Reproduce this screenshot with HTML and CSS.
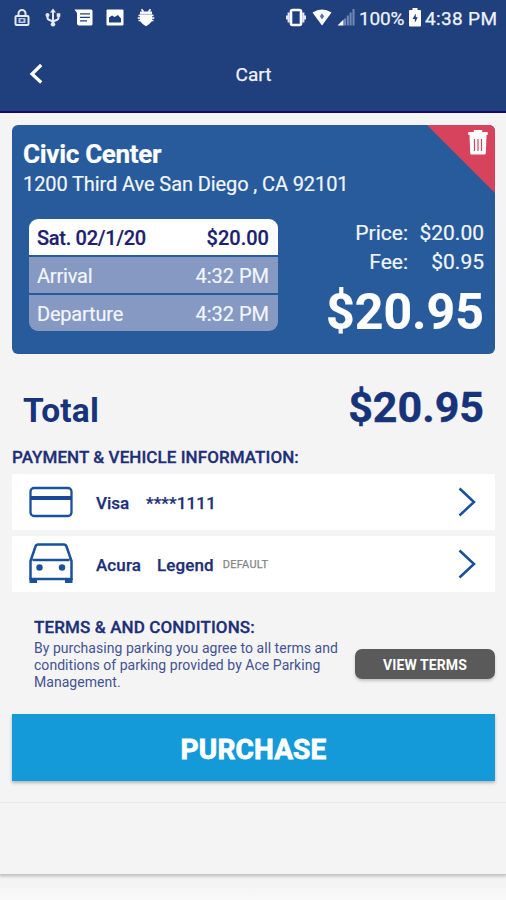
FILE: index.html
```
<!DOCTYPE html>
<html lang="en">
<head>
<meta charset="utf-8">
<title>Cart</title>
<link rel="stylesheet" href="styles.css">
</head>
<body>
<header class="header">
  <div class="status">
    <div class="status-icons">
      <svg width="16" height="20" viewBox="0 0 16 20"><path d="M4.500 8V5.500a3.500 3.500 0 0 1 7 0V8" fill="none" stroke="#e4e9f5" stroke-width="2"/><rect x="1.500" y="8" width="13" height="9" rx="1" fill="none" stroke="#e4e9f5" stroke-width="2"/><path d="M4.500 10h7v5h-7z" fill="#b9c5df"/><path d="M6.500 11.300h3v2.200h-3z" fill="#203f7d"/></svg>
      <svg width="16" height="20" viewBox="0 0 16 20"><path d="M8 3v13M2.500 7v2.500q0 2 2 2.500L8 13.500M13.500 7v2.500q0 2-2 2.500L8 13.500" fill="none" stroke="#e4e9f5" stroke-width="2"/><path d="M8 .5l3 4H5z" fill="#e4e9f5"/><circle cx="8" cy="16.300" r="2.300" fill="#e4e9f5"/><circle cx="2.500" cy="7" r="2" fill="#e4e9f5"/><path d="M11.700 5.200h3.600v3.600h-3.600z" fill="#e4e9f5"/></svg>
      <svg width="20" height="20" viewBox="0 0 20 20"><path d="M.5 1.500H17q1.500 0 1.500 1.500v13q0 1.500-1.500 1.500H5q-2 0-2-2V5z" fill="#fff"/><path d="M6 5.800h10M6 9.300h10M6 12.800h7" stroke="#203f7d" stroke-width="1.200"/></svg>
      <svg width="18" height="20" viewBox="0 0 18 20"><rect x=".5" y="1.500" width="17" height="16" rx="1" fill="#fff"/><path d="M3 14.500V9.500l3-2 2.500 1.500L12 7l3 3.500v4z" fill="#203f7d"/></svg>
      <svg width="18" height="20" viewBox="0 0 18 20"><path d="M3 3.500h12V13q-2 3-6 5.300Q5 16 3 13z" fill="#fff"/><path d="M4.500 1.200l2 2.500M13.500 1.200l-2 2.500M1.500 7.500h15M.7 10h16.600M1.500 12.500h15" fill="none" stroke="#fff" stroke-width="1.700"/><path d="M2 6.300h14" stroke="#8c9dc2" stroke-width=".8"/></svg>
    </div>
    <div class="status-info">
      <svg class="vibrate" width="20" height="20" viewBox="0 0 20 20"><rect x="5" y="2" width="10" height="15" rx="1.500" fill="none" stroke="#fff" stroke-width="2.600"/><path d="M2.700 4.500v10M17.300 4.500v10M.7 7.500v4M19.300 7.500v4" stroke="#e4e9f5" stroke-width="2.200"/></svg>
      <svg class="wifi" width="20" height="20" viewBox="0 0 20 20"><path d="M.5 4.500Q10-1.700 19.500 4.500L10 17.500z" fill="#fff"/><path d="M10 5.300l2.200 3-2.200 3.200-2.200-3.200z" fill="#6277a6"/></svg>
      <svg class="signal" width="18" height="20" viewBox="0 0 18 20"><path d="M.5 17.500L6.500 11.500v6z" fill="#fff"/><path d="M8 10.500v7M10.800 7.500v10M13.600 4.500v13M16.500 1v16.500" stroke="#7187b4" stroke-width="2.100"/></svg>
      <span class="battery-level">100%</span>
      <svg class="battery" width="12" height="20" viewBox="0 0 12 20"><path d="M3.500 0h5v2H11q1 0 1 1v14.500q0 1-1 1H1q-1 0-1-1V3q0-1 1-1h2.500z" fill="#fff"/><path d="M6.800 5.500L3.500 11h2.300v3.800L8.800 9.200H6.800z" fill="#203f7d"/></svg>
      <span class="clock">4:38 PM</span>
    </div>
  </div>
  <div class="navbar">
    <svg class="back" width="14" height="22" viewBox="0 0 14 22"><path d="M12.200 2L3 11l9.200 8.500" fill="none" stroke="#fff" stroke-width="3.200"/></svg>
    <h1 class="title">Cart</h1>
  </div>
</header>
<main class="content">
  <section class="ticket">
    <div class="remove"><svg width="20" height="26" viewBox="0 0 20 26"><path d="M.3 3h5.500V1h8.400v2h5.500v3H.3zM1.500 6h17L17.800 24q0 1.500-1.500 1.500H3.700q-1.500 0-1.500-1.500z" fill="#fff"/><path d="M6.500 10v12M10 10v12M13.500 10v12" stroke="#d7435c" stroke-width="1.200"/></svg></div>
    <h2 class="place">Civic Center</h2>
    <p class="address">1200 Third Ave San Diego , CA 92101</p>
    <div class="ticket-body">
      <div class="times">
        <div class="time-row time-date"><span class="date">Sat. 02/1/20</span><span>$20.00</span></div>
        <div class="time-row"><span class="label">Arrival</span><span>4:32 PM</span></div>
        <div class="time-row"><span class="label">Departure</span><span>4:32 PM</span></div>
      </div>
      <div class="costs">
        <div class="cost"><span>Price:</span><span class="amount">$20.00</span></div>
        <div class="cost"><span>Fee:</span><span class="amount">$0.95</span></div>
        <div class="sum">$20.95</div>
      </div>
    </div>
  </section>
  <section class="total"><span class="total-label">Total</span><span class="total-value">$20.95</span></section>
  <h3 class="heading">PAYMENT &amp; VEHICLE INFORMATION:</h3>
  <div class="options">
    <div class="option">
      <svg class="option-icon" width="44" height="44" viewBox="0 0 44 44"><rect x="1.500" y="8" width="41" height="28" rx="3.500" fill="none" stroke="#1b509a" stroke-width="2.300"/><path d="M1.500 18h41" stroke="#174994" stroke-width="4"/></svg>
      <span class="visa">Visa</span><span class="digits">****1111</span>
      <svg class="chevron" width="18" height="30" viewBox="0 0 18 30"><path d="M1.500 1.500L16 15 1.500 28.500" fill="none" stroke="#174f9f" stroke-width="2.500"/></svg>
    </div>
    <div class="option">
      <svg class="option-icon" width="44" height="44" viewBox="0 0 44 44"><path d="M1.500 37V19L6.500 4.500q.7-2 2.700-2h25.600q2 0 2.700 2L42.500 19v18zM3.500 18h37" fill="none" stroke="#1b509a" stroke-width="2.500"/><path d="M.5 36h7.500v5H.5zM36 36h7.500v5H36z" fill="#1b509a"/><circle cx="10.500" cy="25.500" r="3.200" fill="#1b509a"/><circle cx="33" cy="25.500" r="3.200" fill="#1b509a"/></svg>
      <span class="make">Acura</span><span class="model">Legend</span><span class="default">DEFAULT</span>
      <svg class="chevron" width="18" height="30" viewBox="0 0 18 30"><path d="M1.500 1.500L16 15 1.500 28.500" fill="none" stroke="#174f9f" stroke-width="2.500"/></svg>
    </div>
  </div>
  <section class="terms">
    <div class="terms-text">
      <h3 class="terms-title">TERMS &amp; AND CONDITIONS:</h3>
      <p class="terms-copy">By purchasing parking you agree to all terms and<br>conditions of parking provided by Ace Parking<br>Management.</p>
    </div>
    <button class="view-terms">VIEW TERMS</button>
  </section>
  <button class="purchase">PURCHASE</button>
</main>
<footer class="footer"></footer>
</body>
</html>
```

FILE: styles.css
```
* { box-sizing: border-box; }
body { margin: 0; height: 900px; background: linear-gradient(#f4f4f4 885px, #fafafa 900px); font-family: Roboto, sans-serif; color: #1d2f78; overflow: hidden; }
h1, h2, h3, p { margin: 0; }
button { border: 0; padding: 0; font-family: inherit; color: #fff; }
svg { display: block; flex: none; }
span { white-space: nowrap; }

.header { height: 113px; background: #203f7d; border-bottom: 2px solid #160b6c; color: #eef2fc; -webkit-text-stroke: .25px #eef2fc; }
.status { display: flex; justify-content: space-between; height: 36px; padding: 8px 8px 0 14px; }
.status-icons { display: flex; }
.status-icons svg:nth-child(2) { margin-left: 15px; }
.status-icons svg:nth-child(3) { margin-left: 13px; }
.status-icons svg:nth-child(4) { margin-left: 12px; }
.status-icons svg:nth-child(5) { margin-left: 13px; }
.status-info { display: flex; font-size: 19px; line-height: 21px; }
.wifi { margin-left: 6px; }
.signal { margin-left: 5px; }
.battery-level { margin-left: 4px; width: 45px; letter-spacing: -.2px; }
.battery { margin-left: 5px; }
.clock { margin-left: 4px; width: 73px; letter-spacing: .35px; }
.navbar { display: grid; grid-template-columns: 1fr auto 1fr; align-items: center; height: 75px; padding: 0 28px 0 29px; }
.title { font-size: 19px; font-weight: 400; line-height: 24px; padding-top: 2px; }

.content { padding: 12px 11px 0 12px; }
.ticket { position: relative; height: 229px; padding: 14px 11px 0 11px; border-radius: 6px; background: #275b9b; color: #f2f5fc; -webkit-text-stroke: .2px; overflow: hidden; }
.remove { position: absolute; top: 0; right: 0; width: 68px; height: 68px; padding: 4px 7px 0 41px; background: #d7435c; clip-path: polygon(0 0, 100% 0, 100% 100%); }
.place { font-size: 26px; font-weight: 700; line-height: 30px; letter-spacing: -.3px; color: #fff; }
.address { margin-top: 2px; font-size: 20px; line-height: 26px; letter-spacing: -.1px; }
.ticket-body { display: flex; justify-content: space-between; margin-top: 22px; }
.times { display: grid; grid-template-rows: 36px 36px 36px; gap: 2px; width: 249px; margin-left: 6px; border-radius: 9px; overflow: hidden; align-self: start; }
.time-row { display: flex; align-items: center; justify-content: space-between; padding: 2px 9px 0 8px; background: #8599c2; font-size: 20px; }
.label { letter-spacing: -.2px; }
.date { letter-spacing: -.3px; }
.time-date { background: #fff; color: #1d2070; font-weight: 500; }
.costs { display: flex; flex-direction: column; align-items: flex-end; }
.cost { display: flex; font-size: 21px; line-height: 29px; text-align: right; }
.amount { width: 76px; }
.sum { font-size: 50px; font-weight: 700; line-height: 58px; margin-top: 6px; color: #fff; }

.total { display: flex; justify-content: space-between; align-items: baseline; height: 93px; padding: 29px 11px 0; color: #17347b; }
.total-label { font-size: 33.500px; font-weight: 700; letter-spacing: .2px; }
.total-value { font-size: 43px; font-weight: 700; line-height: 48px; -webkit-text-stroke: .4px; }
.heading { font-size: 17px; font-weight: 500; line-height: 20px; letter-spacing: .07px; white-space: nowrap; -webkit-text-stroke: .3px; }
.options { display: grid; gap: 6px; margin-top: 7px; }
.option { display: flex; align-items: center; height: 56px; padding: 0 19px 0 17px; background: #fff; font-size: 17px; font-weight: 500; -webkit-text-stroke: .25px; }
.visa { margin-left: 23px; width: 50px; padding-top: 1px; }
.digits { padding-top: 1px; letter-spacing: .15px; }
.make, .model { padding-top: 1px; letter-spacing: .1px; }
.make { margin-left: 23px; width: 61px; }
.default { margin-left: 9px; font-size: 11px; font-weight: 400; letter-spacing: .25px; color: #858585; }
.chevron { margin-left: auto; }
.terms { display: flex; justify-content: space-between; height: 122px; padding: 25px 0 0 22px; }
.terms-title { font-size: 17px; font-weight: 500; line-height: 20px; letter-spacing: .12px; white-space: nowrap; -webkit-text-stroke: .3px; }
.terms-copy { margin-top: 3px; font-size: 14px; line-height: 17px; letter-spacing: .04px; white-space: nowrap; color: #435292; }
.view-terms { width: 140px; height: 30px; margin-top: 32px; padding-top: 1px; border-radius: 7px; background: #5a5a5a; box-shadow: 0 2px 3px #9998; font-size: 14px; font-weight: 700; letter-spacing: .1px; }
.purchase { display: block; width: 100%; height: 67px; padding-top: 3px; background: #149ad9; box-shadow: 0 2px 3px #8889; font-size: 28px; font-weight: 700; letter-spacing: .15px; -webkit-text-stroke: .8px; }
.footer { height: 73px; margin-top: 21px; border-top: 1px solid #e9e9e9; border-bottom: 1px solid #c5c5c5; box-shadow: 0 2px 2px #aaa8; }
```
